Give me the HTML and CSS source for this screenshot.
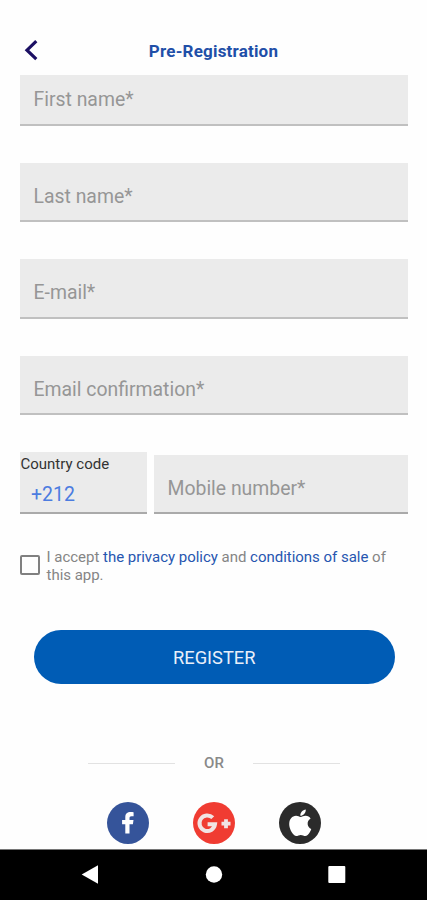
FILE: index.html
```html
<!DOCTYPE html>
<html lang="en">
<head>
<meta charset="utf-8">
<title>Pre-Registration</title>
<link rel="stylesheet" href="styles.css">
</head>
<body>
<div class="screen">
  <header class="header">
    <svg class="back" width="16" height="22" viewBox="0 0 16 22"><path d="M13.300 2.200 4 11.200l9.300 8.900" fill="none" stroke="#1b0f63" stroke-width="3.200"/></svg>
    <h1 class="title">Pre-Registration</h1>
  </header>
  <main class="form">
    <div class="field first"><span>First name*</span></div>
    <div class="field"><span>Last name*</span></div>
    <div class="field"><span>E-mail*</span></div>
    <div class="field"><span>Email confirmation*</span></div>
    <div class="phone">
      <div class="country">
        <span class="country-label">Country code</span>
        <span class="country-value">+212</span>
      </div>
      <div class="field mobile"><span>Mobile number*</span></div>
    </div>
    <div class="terms">
      <span class="checkbox"></span>
      <p class="terms-text">I accept <a>the privacy policy</a> and <a>conditions of sale</a> of<br>this app.</p>
    </div>
    <div class="register">REGISTER</div>
    <div class="divider"><i class="rule"></i><span>OR</span><i class="rule"></i></div>
    <div class="social">
      <svg width="42" height="42" viewBox="0 0 42 42"><circle cx="21" cy="21" r="21" fill="#35549a"/><path d="M18.300 31.500V22.300h-3.200v-4.400h3.200v-2.500c0-3.800 2-5.300 5.300-5.300 1.300 0 2.500.1 3 .2v4h-2.100c-1.600 0-2 .8-2 2v1.600h4l-.6 4.400h-3.400v9.200z" fill="#fff"/></svg>
      <svg width="42" height="42" viewBox="0 0 42 42"><circle cx="21" cy="21" r="21" fill="#f03c32"/><path d="M19.800 15.700A7.800 7.800 0 1 0 22 22.300H14.600" fill="none" stroke="#f1e4e4" stroke-width="4"/><path d="M33 17.200v9M28.500 21.700h9" stroke="#f1e4e4" stroke-width="3.800"/></svg>
      <svg width="42" height="42" viewBox="0 0 42 42"><circle cx="21" cy="21" r="21" fill="#2b2b2b"/><path transform="translate(3.900 3) scale(1.450 1.480)" d="M17.050 20.280c-.98.950-2.050.800-3.080.350-1.090-.46-2.090-.48-3.240 0-1.440.62-2.200.440-3.060-.35C2.790 15.250 3.510 7.590 9.050 7.310c1.350.070 2.290.740 3.080.800 1.180-.24 2.310-.93 3.570-.84 1.510.12 2.650.720 3.400 1.800-3.120 1.870-2.380 5.980.480 7.130-.57 1.500-1.310 2.990-2.540 4.090zM12.030 7.250c-.15-2.230 1.660-4.070 3.740-4.250.29 2.580-2.340 4.500-3.740 4.250z" fill="#fff"/></svg>
    </div>
  </main>
  <nav class="navbar">
    <svg width="18" height="20" viewBox="0 0 18 20"><path d="M.7 9.500 17 .3v18.400z" fill="#fff"/></svg>
    <svg width="18" height="20" viewBox="0 0 18 20"><circle cx="9" cy="9.500" r="8.200" fill="#fff"/></svg>
    <svg width="18" height="20" viewBox="0 0 18 20"><rect x=".3" y="1" width="17" height="17" rx="1" fill="#fff"/></svg>
  </nav>
</div>
</body>
</html>
```
FILE: styles.css
```css
* { box-sizing: border-box; }
body { margin: 0; background: #fefefe; font-family: Roboto, "Liberation Sans", sans-serif; }
.screen { width: 427px; height: 900px; display: flex; flex-direction: column; overflow: hidden; }
.header { height: 74.500px; flex: none; padding: 39px 23px 0; display: grid; grid-template-columns: 16px 1fr 16px; }
.title { margin: 0; text-align: center; font-size: 17px; line-height: 24px; font-weight: 700; color: #1f4fa8; letter-spacing: .2px; }
.form { flex: 1; padding: 0 19px 0 20px; display: flex; flex-direction: column; }
.field { height: 59.500px; margin: 0 0 37.100px; padding: 11px 13.500px 0; background: #ebebeb; border-bottom: 2px solid #c0c0c0; color: #969696; font-size: 19.400px; line-height: 46px; flex: none; white-space: nowrap; }
.first { height: 51px; padding-top: 2px; }
.phone { display: flex; gap: 7px; align-items: flex-end; height: 62px; flex: none; }
.country { width: 127px; height: 62px; background: #ebebeb; border-bottom: 2px solid #aaa; display: flex; flex-direction: column; white-space: nowrap; }
.country-label { font-size: 15px; line-height: 24px; color: #333; padding-left: .5px; }
.country-value { padding-left: 11px; font-size: 19.500px; line-height: 37px; color: #4c7ce0; }
.mobile { flex: 1; margin: 0; border-color: #aaa; }
.terms { display: flex; gap: 6.500px; height: 37px; margin-top: 35px; }
.checkbox { width: 20px; height: 20px; margin-top: 6px; border: 2px solid #808080; border-radius: 2px; flex: none; }
.terms-text { margin: -1px 0 0; font-size: 15px; line-height: 18px; color: #858585; white-space: nowrap; letter-spacing: -.02px; }
.terms-text a { color: #2656b0; }
.register { height: 54px; margin: 44px 13.500px 0 14px; border-radius: 27px; background: #005cb5; color: #e9effa; font-size: 18.300px; line-height: 55px; text-align: center; }
.divider { display: flex; justify-content: center; align-items: center; height: 24px; margin-top: 67px; color: #898989; font-size: 15px; font-weight: 500; }
.divider span { width: 78px; text-align: center; }
.rule { width: 87px; height: 1px; background: #e2e2e2; }
.social { display: flex; justify-content: center; gap: 44px; margin: 27px 0 0 0; }
.navbar { height: 51.500px; flex: none; background: #000; border-top: 1px solid #777; padding: 15px 81px 0; display: flex; justify-content: space-between; }
```
